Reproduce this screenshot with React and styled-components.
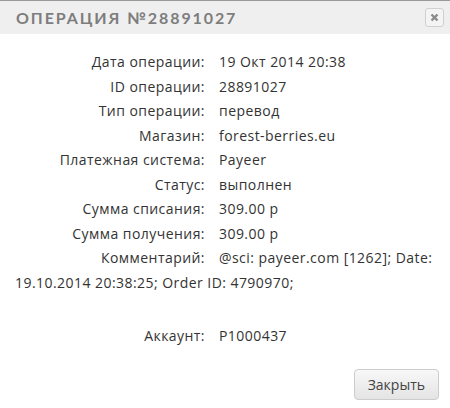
import styled, { createGlobalStyle } from 'styled-components';

const GlobalStyle = createGlobalStyle`
  html, body {
    margin: 0;
    padding: 0;
    background: #fff;
  }
`;

const Modal = styled.div`
  width: 450px;
  height: 408px;
  display: flex;
  flex-direction: column;
  background: #fff;
  font-family: 'Open Sans', sans-serif;
  color: #333;
`;

const Header = styled.div`
  height: 33px;
  border-top: 1px solid #999;
  background: #efefef;
  display: flex;
  align-items: center;
  justify-content: space-between;
  padding: 0 6px 0 16px;
`;

const Title = styled.h3`
  margin: 0;
  font-family: 'Lato', sans-serif;
  font-weight: 700;
  font-size: 16px;
  letter-spacing: 1.9px;
  color: #7d7d7d;
`;

const CloseBox = styled.button`
  width: 19px;
  height: 19px;
  padding: 0;
  border: 1px solid #d0d0d0;
  border-radius: 3px;
  background: #f4f4f4;
  display: flex;
  align-items: center;
  justify-content: center;
`;

const Body = styled.div`
  flex: 1;
  padding: 16px 15px 0;
  font-size: 14px;
  letter-spacing: 0.45px;
  line-height: 24.5px;
`;

const Row = styled.div`
  margin-bottom: ${(p) => (p.$gap ? '29px' : '0')};
`;

const Label = styled.span`
  display: inline-block;
  width: 190px;
  margin-right: 14px;
  text-align: right;
`;

const Footer = styled.div`
  display: flex;
  justify-content: flex-end;
  padding: 0 11px 8px;
`;

const Button = styled.button`
  height: 31px;
  padding: 0 13px;
  font-family: 'Open Sans', sans-serif;
  font-size: 14px;
  color: #444;
  border: 1px solid #ccc;
  border-radius: 4px;
  background: linear-gradient(#f8f8f8, #e4e4e4);
`;

const rows = [
  ['Дата операции:', '19 Окт 2014 20:38'],
  ['ID операции:', '28891027'],
  ['Тип операции:', 'перевод'],
  ['Магазин:', 'forest-berries.eu'],
  ['Платежная система:', 'Payeer'],
  ['Статус:', 'выполнен'],
  ['Сумма списания:', '309.00 р'],
  ['Сумма получения:', '309.00 р'],
];

export default function App() {
  return (
    <>
      <GlobalStyle />
      <Modal>
        <Header>
          <Title>ОПЕРАЦИЯ №28891027</Title>
          <CloseBox>
            <svg width="9" height="9" viewBox="0 0 9 9">
              <path d="M1.5 1.5 L7.5 7.5 M7.5 1.5 L1.5 7.5" stroke="#8a8a8a" strokeWidth="2.4" />
            </svg>
          </CloseBox>
        </Header>
        <Body>
          {rows.map(([k, v]) => (
            <Row key={k}>
              <Label>{k}</Label>
              {v}
            </Row>
          ))}
          <Row $gap>
            <Label>Комментарий:</Label>
            @sci: payeer.com [1262]; Date: 19.10.2014 20:38:25; Order ID: 4790970;
          </Row>
          <Row>
            <Label>Аккаунт:</Label>
            P1000437
          </Row>
        </Body>
        <Footer>
          <Button>Закрыть</Button>
        </Footer>
      </Modal>
    </>
  );
}
